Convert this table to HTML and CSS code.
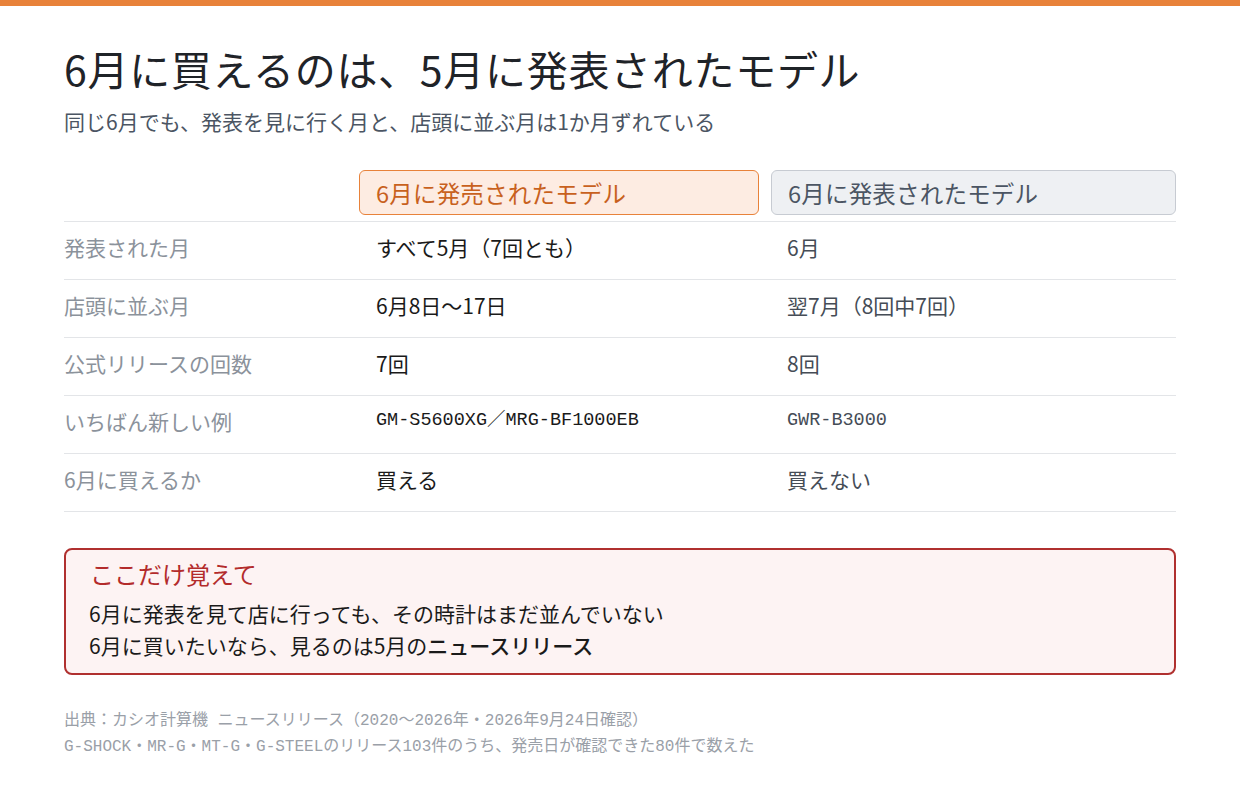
FILE: index.html
```html
<!DOCTYPE html>
<html lang="ja">
<head>
    <meta charset="UTF-8">
    <meta name="viewport" content="width=device-width, initial-scale=1.0">
    <title>6月に買えるのは、5月に発表されたモデル</title>
    <link rel="stylesheet" href="styles.css">
</head>
<body>
    <div class="top-bar"></div>

    <main class="page">
        <h1 class="title">6月に買えるのは、5月に発表されたモデル</h1>
        <p class="subtitle">同じ6月でも、発表を見に行く月と、店頭に並ぶ月は1か月ずれている</p>

        <div class="compare">
            <div class="row row-head">
                <div class="label"></div>
                <div class="pill pill-sale">6月に発売されたモデル</div>
                <div class="pill pill-announce">6月に発表されたモデル</div>
            </div>
            <div class="row">
                <div class="label">発表された月</div>
                <div class="value">すべて5月（7回とも）</div>
                <div class="value value-sub">6月</div>
            </div>
            <div class="row">
                <div class="label">店頭に並ぶ月</div>
                <div class="value">6月8日～17日</div>
                <div class="value value-sub">翌7月（8回中7回）</div>
            </div>
            <div class="row">
                <div class="label">公式リリースの回数</div>
                <div class="value">7回</div>
                <div class="value value-sub">8回</div>
            </div>
            <div class="row">
                <div class="label">いちばん新しい例</div>
                <div class="value mono">GM-S5600XG／MRG-BF1000EB</div>
                <div class="value value-sub mono">GWR-B3000</div>
            </div>
            <div class="row">
                <div class="label">6月に買えるか</div>
                <div class="value">買える</div>
                <div class="value value-sub">買えない</div>
            </div>
        </div>

        <section class="callout">
            <h2 class="callout-title">ここだけ覚えて</h2>
            <p>6月に発表を見て店に行っても、その時計はまだ並んでいない</p>
            <p>6月に買いたいなら、見るのは5月の<strong>ニュースリリース</strong></p>
        </section>

        <footer class="source">
            <p>出典：カシオ計算機 ニュースリリース（2020〜2026年・2026年9月24日確認）</p>
            <p>G-SHOCK・MR-G・MT-G・G-STEELのリリース103件のうち、発売日が確認できた80件で数えた</p>
        </footer>
    </main>
</body>
</html>
```

FILE: styles.css
```css
* {
    margin: 0;
    padding: 0;
    box-sizing: border-box;
}

body {
    font-family: "Noto Sans CJK JP", "Noto Sans", sans-serif;
    background: white;
    color: #1f2328;
}

.top-bar {
    height: 6px;
    background: #e8823a;
}

.page {
    padding: 35px 64px 0;
}

.title {
    font-size: 41px;
    font-weight: 400;
    line-height: 55px;
    letter-spacing: 0.7px;
    color: #1f2328;
}

.subtitle {
    margin-top: 10px;
    font-size: 21px;
    line-height: 30px;
    color: #4b5563;
}

.compare {
    margin-top: 34px;
}

.row {
    display: grid;
    grid-template-columns: 283px 400px 405px;
    column-gap: 12px;
    border-bottom: 1px solid #e3e5e8;
}

.row-head {
    padding-bottom: 6px;
}

.pill {
    height: 45px;
    display: flex;
    align-items: center;
    padding-left: 16px;
    border-radius: 6px;
    font-size: 23.5px;
    letter-spacing: 0.2px;
}

.pill-sale {
    background: #fdece2;
    border: 1.5px solid #e8823a;
    color: #c8611d;
}

.pill-announce {
    background: #eef0f3;
    border: 1.5px solid #c7cbd2;
    color: #4b5563;
}

.label,
.value {
    padding: 10px 0 17px;
    font-size: 21px;
    line-height: 30px;
}

.label {
    color: #8b929b;
}

.value {
    padding-left: 17px;
    color: #1a1a1a;
}

.value-sub {
    padding-left: 16px;
    color: #454c56;
}

.mono {
    font-family: "Liberation Mono", "Noto Sans CJK JP", monospace;
    font-size: 18.5px;
}

.callout {
    margin-top: 36px;
    padding: 9px 23px 12px;
    background: #fdf3f3;
    border: 2px solid #b0302f;
    border-radius: 8px;
}

.callout-title {
    font-size: 24px;
    font-weight: 400;
    line-height: 30px;
    color: #b32b2b;
    margin-bottom: 8px;
    padding-left: 1px;
}

.callout p {
    font-size: 21px;
    line-height: 32px;
    color: #1a1a1a;
}

.callout strong {
    font-weight: 500;
}

.source {
    margin-top: 33px;
    font-family: "Liberation Mono", "Noto Sans CJK JP", monospace;
    font-size: 16px;
    line-height: 26px;
    color: #9aa0a8;
}
```
